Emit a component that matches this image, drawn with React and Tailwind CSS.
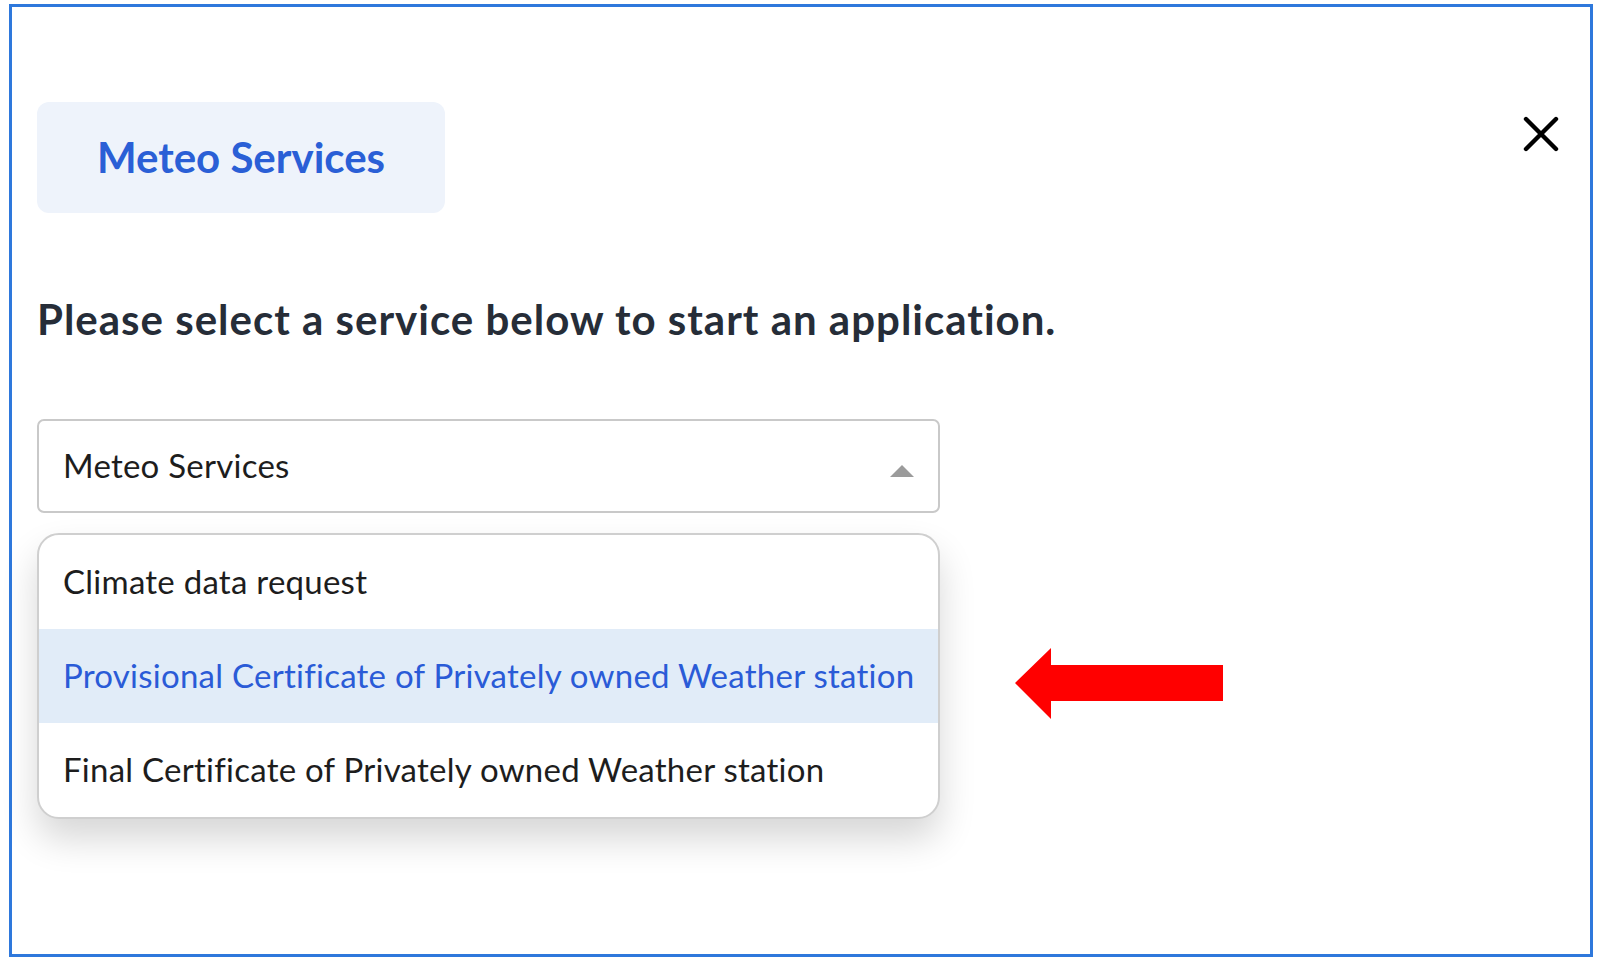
const ITEMS = [
  'Climate data request',
  'Provisional Certificate of Privately owned Weather station',
  'Final Certificate of Privately owned Weather station',
]

export default function App() {
  const selected = 1
  return (
    <div className="w-[1600px] h-[962px] bg-white pl-[9px] pt-[4px]" style={{ fontFamily: 'Lato, "Noto Sans", sans-serif' }}>
      <div className="w-[1584px] h-[953px] border-[3px] border-[#2e78dc] bg-white pl-[25px] pr-[31px] pt-[95px]">
        <div className="flex justify-between items-start">
          <div className="w-[408px] h-[111px] rounded-[12px] bg-[#eef3fb] flex items-center justify-center">
            <span className="text-[42px] font-bold text-[#2a5fd6]">Meteo Services</span>
          </div>
          <button className="mt-[14px]">
            <svg width="36" height="36" viewBox="0 0 36 36">
              <path d="M3 3 L33 33 M33 3 L3 33" stroke="#000" strokeWidth="4.4" strokeLinecap="round" fill="none" />
            </svg>
          </button>
        </div>

        <h1 className="mt-[81px] text-[42px] leading-[50px] font-bold text-[#262d38] tracking-[1px]">Please select a service below to start an application.</h1>

        <div className="mt-[75px] w-[903px] h-[94px] border-2 border-[#c9c9c9] rounded-[7px] flex items-center justify-between pl-[24px] pr-[24px]">
          <span className="text-[33px] text-[#1d1d1d] tracking-[0.25px]">Meteo Services</span>
          <span className="w-0 h-0 border-l-[12px] border-r-[12px] border-b-[12px] border-l-transparent border-r-transparent border-b-[#9b9b9b] mt-[10px]" />
        </div>

        <div className="flex items-start mt-[20px]">
          <div className="w-[903px] border-2 border-[#cfcfcf] rounded-[22px] overflow-hidden bg-white shadow-[0_20px_36px_rgba(0,0,0,0.16)]">
            {ITEMS.map((t, i) => (
              <div key={t} className={`h-[94px] flex items-center pl-[24px] text-[33px] tracking-[0.25px] ${i === selected ? 'bg-[#e1ecf8] text-[#2a5bd7]' : 'text-[#1d1d1d]'}`}>{t}</div>
            ))}
          </div>
          <svg className="ml-[75px] mt-[115px]" width="208" height="71" viewBox="0 0 208 71">
            <polygon points="0,35 36,0 36,17 208,17 208,53 36,53 36,71" fill="#ff0000" />
          </svg>
        </div>
      </div>
    </div>
  )
}
